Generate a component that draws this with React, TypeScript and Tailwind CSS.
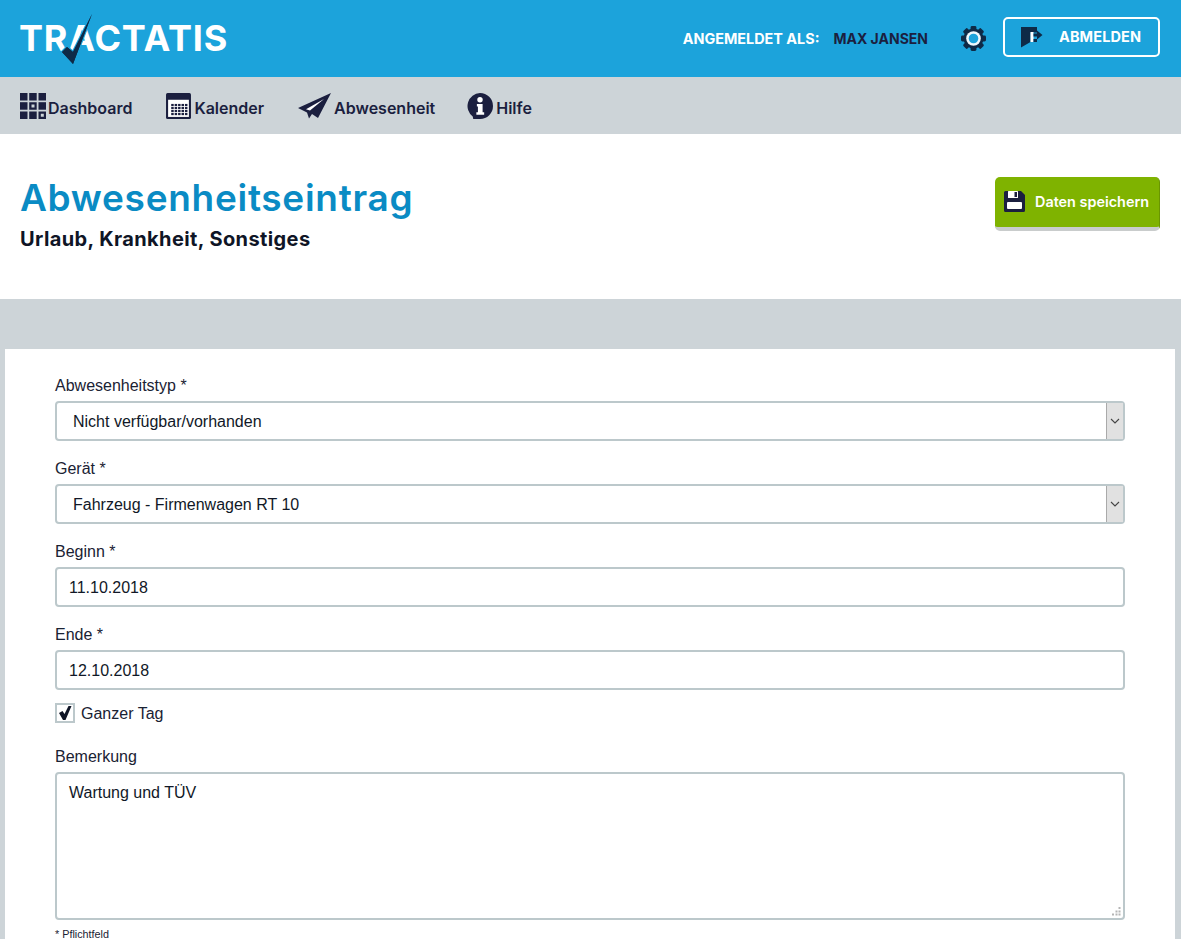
import React from "react";

const navy = "#1b1f3f";

function Logo() {
  return (
    <div className="relative -ml-[1px] h-[50px] w-[210px] font-['Inter',sans-serif] text-[36px] font-bold leading-[48px] tracking-[0.8px] text-white">
      <span>TRACTATIS</span>
      <svg className="absolute left-[37px] top-[0px]" width="50" height="56" viewBox="0 0 50 56">
        <path d="M36 0 L17 50 L6 38 L11 33 L17 38 Z" fill="#0e2a47" stroke="#1ca3db" strokeWidth="2.5" strokeLinejoin="miter" paintOrder="stroke" />
        <path d="M36 0 L17 50 L6 38 L11 33 L17 38 Z" fill="#0e2a47" />
      </svg>
    </div>
  );
}

function DashboardIcon() {
  return (
    <svg width="26" height="26" viewBox="0 0 26 26" fill={navy}>
      <rect x="0" y="0" width="7.5" height="7.5" /><rect x="9.2" y="0" width="7.5" height="7.5" /><rect x="18.5" y="0" width="7.5" height="7.5" />
      <rect x="0" y="9.2" width="7.5" height="7.5" /><rect x="18.5" y="9.2" width="7.5" height="7.5" />
      <path fillRule="evenodd" d="M9.2 9.2h7.5v7.5H9.2z M11.5 11.5v3h3v-3z" />
      <rect x="0" y="18.5" width="7.5" height="7.5" /><rect x="9.2" y="18.5" width="7.5" height="7.5" />
      <path fillRule="evenodd" d="M18.5 18.5H26V26h-7.5z M20.8 20.8v3h3v-3z" />
    </svg>
  );
}

function CalendarIcon() {
  const cells = [];
  for (let r = 0; r < 4; r++) for (let c = 0; c < 5; c++) cells.push(<rect key={`${r}-${c}`} x={5 + c * 3.3} y={10.5 + r * 2.9} width="2.4" height="2.1" fill={navy} />);
  return (
    <svg width="25" height="26" viewBox="0 0 24 25">
      <rect x="0" y="0" width="24" height="25" rx="1.5" fill={navy} />
      <rect x="2" y="6.5" width="20" height="16.5" fill="#fff" />
      {cells}
    </svg>
  );
}

function PlaneIcon() {
  return (
    <svg width="33" height="26" viewBox="0 0 33 26">
      <path d="M0 15 L33 0 L20 25 L14 21 L11 25.5 L9 19.5 Z" fill={navy} />
      <path d="M8 16.2 L26 6 L12 17.5 Z" fill="#fff" />
    </svg>
  );
}

function InfoIcon() {
  return (
    <svg width="26" height="26" viewBox="0 0 25 25">
      <path d="M12.5 0 A12.5 12.5 0 0 1 12.5 25 L6 25 L5.5 22.5 A12.5 12.5 0 0 1 12.5 0Z" fill={navy} />
      <circle cx="12.5" cy="6.5" r="2.6" fill="#fff" />
      <path d="M9.5 10.5 h5.5 v8 h1.5 v2.5 h-7.5 v-2.5 h1.5 v-5.5 h-1z" fill="#fff" />
    </svg>
  );
}

function GearIcon() {
  const teeth = [];
  for (let i = 0; i < 8; i++) teeth.push(<rect key={i} x="9.2" y="0" width="5.6" height="5" rx="1.4" fill="#0e2a47" transform={`rotate(${i * 45} 12 12)`} />);
  return (
    <svg width="25" height="25" viewBox="0 0 24 24">
      {teeth}
      <circle cx="12" cy="12" r="9.6" fill="#0e2a47" />
      <circle cx="12" cy="12" r="7" fill="#eef7fc" />
      <circle cx="12" cy="12" r="4.6" fill="#1ca3db" />
    </svg>
  );
}

function LogoutIcon() {
  return (
    <svg width="22" height="21" viewBox="0 0 22 21">
      <path d="M0 0 H16 V5.5 H9.5 V15 L0 20.5 Z" fill="#0e2a47" />
      <path d="M9.5 5 H12.5 V15 H9.5 Z" fill="#fff" />
      <path d="M12.5 6.5 H16 V3.5 L21.5 8 L16 12.5 V9.5 H12.5 Z" fill="#0e2a47" />
      <path d="M12.5 12 H16 V15 H12.5 Z" fill="#0e2a47" />
    </svg>
  );
}

function FloppyIcon() {
  return (
    <svg width="21" height="21" viewBox="0 0 21 21">
      <path d="M1.5 0 H17 L21 4 V19.5 A1.5 1.5 0 0 1 19.5 21 H1.5 A1.5 1.5 0 0 1 0 19.5 V1.5 A1.5 1.5 0 0 1 1.5 0Z" fill={navy} />
      <rect x="4" y="0" width="10" height="7" rx="0.5" fill="#fff" />
      <rect x="10.5" y="1" width="2.5" height="5" fill={navy} />
      <rect x="3" y="11" width="15" height="7" rx="1" fill="#fff" />
    </svg>
  );
}

function Label({ children }: { children: React.ReactNode }) {
  return <label className="block h-[28px] pt-[1px] text-[16px] leading-[24px]">{children}</label>;
}

function SelectField({ value }: { value: string }) {
  return (
    <div className="relative mb-[15px] h-[40px]">
      <select defaultValue={value} className="h-[40px] w-full appearance-none rounded-[4px] border-2 border-[#bcc8cb] bg-white pl-[16px] pt-[2px] text-[16px] text-[#111827] outline-none">
        <option>{value}</option>
      </select>
      <div className="absolute right-[2px] top-[2px] flex h-[36px] w-[17px] items-center justify-center border-l border-[#aaaaaa] bg-[#e1e1e1]">
        <svg width="10" height="6" viewBox="0 0 10 6" fill="none" stroke="#444" strokeWidth="1.1"><path d="M1 1l4 4 4-4" /></svg>
      </div>
    </div>
  );
}

function InputField({ value, mb }: { value: string; mb: string }) {
  return (
    <input
      defaultValue={value}
      className={`block h-[40px] w-full rounded-[4px] border-2 border-[#bcc8cb] bg-white px-[12px] pt-[2px] text-[16px] text-[#111827] outline-none ${mb}`}
    />
  );
}

export default function App() {
  return (
    <div className="flex h-screen flex-col overflow-hidden bg-[#cdd4d8] font-['Liberation_Sans',Arial,sans-serif] text-[#1a2233]">
      <header className="flex h-[77px] shrink-0 items-center bg-[#1ca3db] pl-[20px] pr-[21px] font-['Inter',sans-serif]">
        <Logo />
        <div className="ml-auto flex items-center">
          <span className="text-[14.4px] font-bold text-white">ANGEMELDET ALS:</span>
          <span className="ml-[14px] text-[14px] font-bold text-[#1b1f3f]">MAX JANSEN</span>
          <span className="mb-[1px] ml-[33px] flex"><GearIcon /></span>
          <button className="mb-[3px] ml-[17px] flex h-[40px] w-[157px] items-center rounded-[5px] border-2 border-white pl-[16px] text-[14.5px] font-bold tracking-[0.1px] text-white">
            <LogoutIcon />
            <span className="ml-[16px]">ABMELDEN</span>
          </button>
        </div>
      </header>

      <nav className="flex h-[57px] shrink-0 items-center pl-[20px] font-['Inter',sans-serif] text-[16px] font-semibold text-[#1b1f3f]">
        <a className="flex items-center gap-[2px]"><DashboardIcon /><span className="pt-[4px]">Dashboard</span></a>
        <a className="ml-[34px] flex items-center gap-[3px]"><CalendarIcon /><span className="pt-[4px]">Kalender</span></a>
        <a className="ml-[34px] flex items-center gap-[3px]"><PlaneIcon /><span className="pt-[4px]">Abwesenheit</span></a>
        <a className="ml-[32px] flex items-center gap-[3px]"><InfoIcon /><span className="pt-[4px]">Hilfe</span></a>
      </nav>

      <section className="flex h-[165px] shrink-0 items-start justify-between bg-white pl-[20px] pr-[21px] font-['Inter',sans-serif]">
        <div>
          <h1 className="mt-[41px] text-[37px] font-semibold leading-[46px] tracking-[0.7px] text-[#0a8bc4]">Abwesenheitseintrag</h1>
          <p className="mt-[4px] text-[20px] font-bold leading-[28px] tracking-[0.4px] text-[#0f1526]">Urlaub, Krankheit, Sonstiges</p>
        </div>
        <button className="mt-[43px] flex h-[54px] w-[165px] items-center rounded-[5px] border-b-[4px] border-r-[1px] border-b-[#c9cccc] border-r-[#6a9600] bg-[#7fb300] pb-[1px] pl-[9px] text-[14.4px] font-semibold text-white">
          <FloppyIcon />
          <span className="ml-[10px] whitespace-nowrap">Daten speichern</span>
        </button>
      </section>

      <div className="h-[50px] shrink-0" />

      <main className="ml-[5px] mr-[6px] flex-1 bg-white pl-[50px] pr-[50px] pt-[24px] text-[16px]">
        <Label>Abwesenheitstyp *</Label>
        <SelectField value="Nicht verfügbar/vorhanden" />
        <Label>Gerät *</Label>
        <SelectField value="Fahrzeug - Firmenwagen RT 10" />
        <Label>Beginn *</Label>
        <InputField value="11.10.2018" mb="mb-[15px]" />
        <Label>Ende *</Label>
        <InputField value="12.10.2018" mb="mb-[13px]" />
        <div className="mb-[21px] flex h-[20px] items-center">
          <span className="flex size-[20px] items-center justify-center border-2 border-[#bcc8cb] bg-white">
            <svg width="14" height="14" viewBox="0 0 14 14"><path d="M1 7 L4.5 5 L6.5 8 L10.5 0 L13.5 0 L7.5 14 L5 14 Z" fill="#0f1526" /></svg>
          </span>
          <span className="ml-[6px] pt-[1px] leading-[20px]">Ganzer Tag</span>
        </div>
        <Label>Bemerkung</Label>
        <div className="relative h-[148px]">
          <textarea
            defaultValue="Wartung und TÜV"
            className="block h-full w-full resize-none rounded-[4px] border-2 border-[#bcc8cb] bg-white px-[12px] pb-[6px] pt-[7px] text-[16px] leading-[24px] text-[#111827] outline-none"
          />
          <svg className="absolute bottom-[4px] right-[4px]" width="9" height="9" viewBox="0 0 9 9" fill="#b5b5b5">
            <rect x="6.5" y="0" width="2" height="2" /><rect x="3.5" y="3.5" width="2" height="2" /><rect x="6.5" y="3.5" width="2" height="2" />
            <rect x="0" y="6.5" width="2" height="2" /><rect x="3.5" y="6.5" width="2" height="2" /><rect x="6.5" y="6.5" width="2" height="2" />
          </svg>
        </div>
        <p className="mt-[8px] text-[10.8px] leading-[12px]">* Pflichtfeld</p>
      </main>
    </div>
  );
}
